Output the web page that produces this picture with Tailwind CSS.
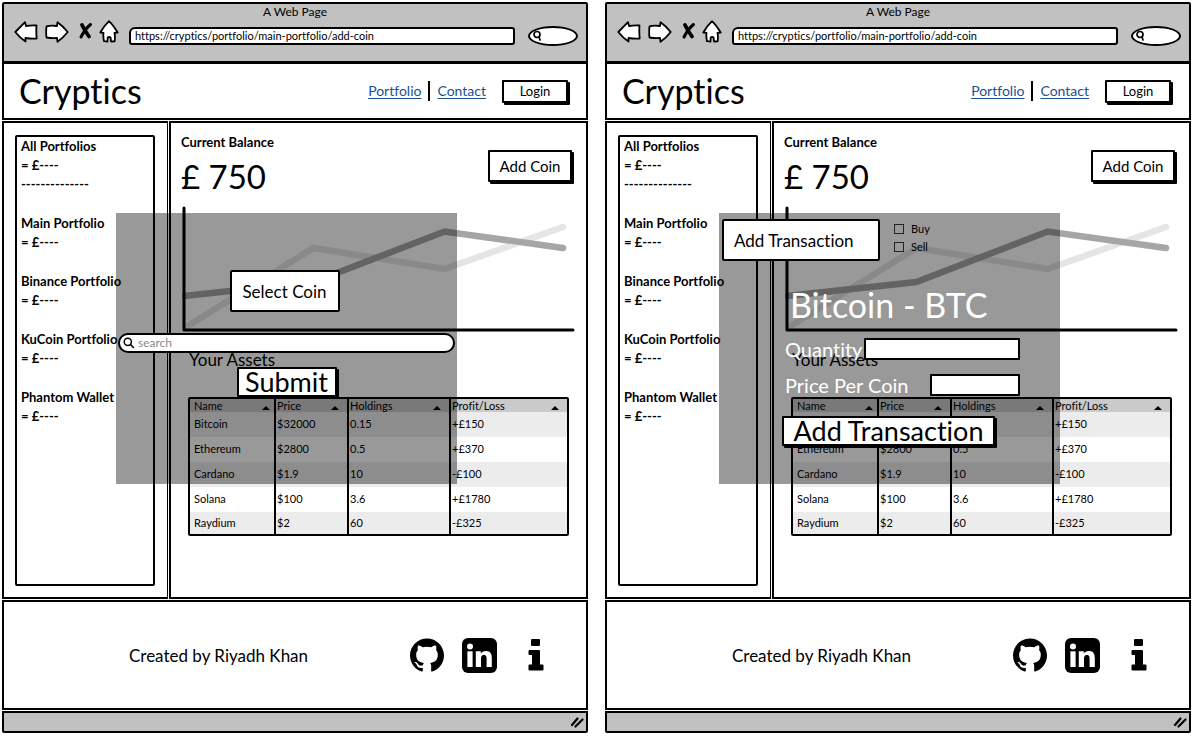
<!DOCTYPE html>
<html lang="en">
<head>
<meta charset="utf-8">
<title>Cryptics</title>
<script src="https://cdn.jsdelivr.net/npm/@tailwindcss/browser@4"></script>
</head>
<body class="bg-white font-['Lato','Open_Sans',sans-serif] text-black [font-variant-ligatures:none]">
<div id="pages" class="grid grid-cols-2 gap-[17px] pt-[2px] pr-[3px] pb-1 pl-[2px]"></div>

<template id="page">
  <article class="relative flex flex-col">
    <header class="rounded-t-[2px] border-2 border-black bg-[#c1c1c1] pb-[19px]">
      <p class="h-[17px] text-center text-xs leading-4">A Web Page</p>
      <div class="flex h-[21px] items-center pr-2 pl-2.5">
        <button type="button" aria-label="Back"><svg class="block h-[22px] w-6" viewBox="0 0 24 22" fill="#fff" stroke="#000" stroke-width="1.8" stroke-linejoin="round"><path d="M1.3 11 L11 1.2 L12 5 Q17 4.200 22.500 4.500 Q22 11 22.700 17.500 Q17 17.800 11.500 17 L11.500 20.500 Q6 17 1.300 11Z"/></svg></button>
        <button type="button" aria-label="Forward" class="ml-[7px]"><svg class="block h-[22px] w-6" viewBox="0 0 24 22" fill="#fff" stroke="#000" stroke-width="1.8" stroke-linejoin="round"><path d="M22.700 11 Q18 5 12.500 1.200 L12 5 Q6 4.300 1.500 5.300 Q.8 11 1.500 16.500 Q7 17.500 12 17 L12.500 20.800 Q18 17 22.700 11Z"/></svg></button>
        <button type="button" aria-label="Stop" class="ml-[9px]"><svg class="block h-[22px] w-[15px]" viewBox="0 0 15 22" fill="none" stroke="#000" stroke-linecap="round"><path stroke-width="3.8" d="M4 4 Q7 10 11 15.500"/><path stroke-width="3" d="M12.500 3.500 Q7 8 3 16"/></svg></button>
        <button type="button" aria-label="Home" class="ml-1.5"><svg class="block h-[23px] w-5" viewBox="0 0 20 23" fill="#fff" stroke="#000" stroke-width="1.800" stroke-linejoin="round"><path d="M10 1.200 Q14 5 18.700 12.500 L15.500 12.800 Q16.300 17 15.600 21.300 L12 21.500 L11.600 17.500 Q10 16.500 8.700 17.500 L8.500 21.500 L5 21.200 Q4 17 4.500 12.800 L1.300 12.500 Q5 6 10 1.200Z"/></svg></button>
        <input type="text" aria-label="Address" value="https://cryptics/portfolio/main-portfolio/add-coin" class="mt-2 ml-2.5 h-[18px] min-w-0 flex-1 rounded-[3px] rounded-tl-[6px] border-2 border-black bg-white px-1 text-[11px] leading-3">
        <label class="mt-2 ml-[13px] flex h-5 w-[50px] items-center rounded-[50%/50%] border-2 border-black bg-white pl-px">
          <svg class="h-3 w-3 shrink-0" viewBox="0 0 12 12" fill="none" stroke="#000" stroke-width="1.700" stroke-linecap="round"><circle cx="6" cy="4.500" r="3"/><path d="M8 7 L9 10"/></svg>
          <input type="search" aria-label="Search the web" class="w-6 bg-transparent text-[11px]">
        </label>
      </div>
    </header>

    <div class="flex h-[57px] items-center border-x-2 border-t border-b-2 border-black pr-[18px] pl-[15px]">
      <h1 class="flex-1 text-[34px] leading-10">Cryptics</h1>
      <nav class="flex items-center text-sm leading-5 text-[#1b5290]">
        <a href="#" class="underline underline-offset-2">Portfolio</a>
        <span class="mx-[7px] h-5 w-[2px] bg-black"></span>
        <a href="#" class="underline underline-offset-2">Contact</a>
      </nav>
      <button type="button" class="ml-4 h-[23px] w-[66px] rounded-[1px] border-2 border-black bg-white text-[13px] leading-4 shadow-[2px_2px_0_0_#000]">Login</button>
    </div>

    <div class="mt-px flex h-[478px] gap-px">
      <aside class="w-[166px] border-2 border-r border-black px-[11px] py-3">
        <div class="flex h-[451px] w-[140px] flex-col gap-5 rounded-[2px] border-2 border-black pl-1 text-[13px] leading-[19px] font-bold whitespace-nowrap">
          <div><h2>All Portfolios</h2><p>= £----</p><p>--------------</p></div>
          <div><h2>Main Portfolio</h2><p>= £----</p></div>
          <div><h2>Binance Portfolio</h2><p>= £----</p></div>
          <div><h2>KuCoin Portfolio</h2><p>= £----</p></div>
          <div><h2>Phantom Wallet</h2><p>= £----</p></div>
        </div>
      </aside>
      <main class="min-w-0 flex-1 border-2 border-black pt-[11px] pr-[11px] pl-2.5">
        <div class="flex items-center justify-between">
          <div>
            <h2 class="text-[13px] leading-4 font-bold">Current Balance</h2>
            <p class="mt-2 text-[33px] leading-9">£ 750</p>
          </div>
          <button type="button" class="mt-1 mr-[3px] h-8 w-[84px] rounded-[1px] border-2 border-black bg-white text-[15px] leading-5 shadow-[2px_2px_0_0_#000]">Add Coin</button>
        </div>
        <svg class="mt-3 block h-[126px] w-full pl-px" viewBox="0 0 392 126" preserveAspectRatio="none" fill="none" stroke-linecap="round" aria-label="Balance chart">
          <path d="M4 121 L131 42 L262 63 L380 21" stroke="#e5e5e5" stroke-width="6.500"/>
          <path d="M2 90 L131 76 L262 25.500 L380 42" stroke="#a6a6a6" stroke-width="6.500"/>
          <path d="M2 2 V124 H390" stroke="#000" stroke-width="3" stroke-linejoin="round"/>
        </svg>
        <h2 class="mt-4 ml-2 text-[17px] leading-6">Your Assets</h2>
        <div class="mt-[25px] mr-1.5 ml-[7px] rounded-[2px] border-2 border-black">
          <table class="w-full table-fixed border-collapse text-left text-[11px]">
            <colgroup><col class="w-[85px]"><col class="w-[73px]"><col class="w-[102px]"><col></colgroup>
            <thead class="bg-[#cacaca] leading-[13px]">
              <tr>
                <th class="border-r-2 border-black p-0 pr-1 pl-1 font-normal"><button type="button" class="flex h-[13px] w-full items-center justify-between">Name <svg class="mt-1 h-1 w-2" viewBox="0 0 8 4"><path d="M0 4 L4 0 L8 4Z"/></svg></button></th>
                <th class="border-r-2 border-black p-0 pr-2 pl-px font-normal"><button type="button" class="flex h-[13px] w-full items-center justify-between">Price <svg class="mt-1 h-1 w-2" viewBox="0 0 8 4"><path d="M0 4 L4 0 L8 4Z"/></svg></button></th>
                <th class="border-r-2 border-black p-0 pr-2 pl-px font-normal"><button type="button" class="flex h-[13px] w-full items-center justify-between">Holdings <svg class="mt-1 h-1 w-2" viewBox="0 0 8 4"><path d="M0 4 L4 0 L8 4Z"/></svg></button></th>
                <th class="p-0 pr-2 pl-px font-normal"><button type="button" class="flex h-[13px] w-full items-center justify-between">Profit/Loss <svg class="mt-1 h-1 w-2" viewBox="0 0 8 4"><path d="M0 4 L4 0 L8 4Z"/></svg></button></th>
              </tr>
            </thead>
            <tbody>
              <tr class="h-[25px] bg-[#ececec]"><td class="border-r-2 border-black p-0 pl-1">Bitcoin</td><td class="border-r-2 border-black p-0 pl-px">$32000</td><td class="border-r-2 border-black p-0 pl-px">0.15</td><td class="p-0 pl-px">+£150</td></tr>
              <tr class="h-[25px]"><td class="border-r-2 border-black p-0 pl-1">Ethereum</td><td class="border-r-2 border-black p-0 pl-px">$2800</td><td class="border-r-2 border-black p-0 pl-px">0.5</td><td class="p-0 pl-px">+£370</td></tr>
              <tr class="h-[25px] bg-[#ececec]"><td class="border-r-2 border-black p-0 pl-1">Cardano</td><td class="border-r-2 border-black p-0 pl-px">$1.9</td><td class="border-r-2 border-black p-0 pl-px">10</td><td class="p-0 pl-px">-£100</td></tr>
              <tr class="h-[25px]"><td class="border-r-2 border-black p-0 pl-1">Solana</td><td class="border-r-2 border-black p-0 pl-px">$100</td><td class="border-r-2 border-black p-0 pl-px">3.6</td><td class="p-0 pl-px">+£1780</td></tr>
              <tr class="h-[22px] bg-[#ececec]"><td class="border-r-2 border-black p-0 pl-1">Raydium</td><td class="border-r-2 border-black p-0 pl-px">$2</td><td class="border-r-2 border-black p-0 pl-px">60</td><td class="p-0 pl-px">-£325</td></tr>
            </tbody>
          </table>
        </div>
      </main>
    </div>

    <footer class="mt-px flex h-[110px] items-center border-2 border-black pr-[42px] pl-[125px]">
      <p class="flex-1 pt-[2px] text-[17px] leading-6">Created by Riyadh Khan</p>
      <a href="#" aria-label="GitHub"><svg class="h-[34px] w-[34px]" viewBox="0 0 24 24"><path d="M12 .297c-6.63 0-12 5.373-12 12 0 5.303 3.438 9.8 8.205 11.385.6.113.82-.258.82-.577 0-.285-.01-1.04-.015-2.04-3.338.724-4.042-1.61-4.042-1.61C4.422 18.07 3.633 17.7 3.633 17.7c-1.087-.744.084-.729.084-.729 1.205.084 1.838 1.236 1.838 1.236 1.07 1.835 2.809 1.305 3.495.998.108-.776.417-1.305.76-1.605-2.665-.3-5.466-1.332-5.466-5.93 0-1.31.465-2.38 1.235-3.22-.135-.303-.54-1.523.105-3.176 0 0 1.005-.322 3.3 1.23.96-.267 1.98-.399 3-.405 1.02.006 2.04.138 3 .405 2.28-1.552 3.285-1.23 3.285-1.23.645 1.653.24 2.873.12 3.176.765.84 1.23 1.91 1.23 3.22 0 4.61-2.805 5.625-5.475 5.92.42.36.81 1.096.81 2.22 0 1.606-.015 2.896-.015 3.286 0 .315.21.69.825.57C20.565 22.092 24 17.592 24 12.297c0-6.627-5.373-12-12-12"/></svg></a>
      <a href="#" aria-label="LinkedIn" class="ml-[18px]"><svg class="h-[35px] w-[35px]" viewBox="0 0 35 35"><rect width="35" height="35" rx="6"/><g fill="#fff"><circle cx="8" cy="8.500" r="3"/><rect x="5.400" y="13.300" width="5.200" height="15.700"/><path d="M13.800 13.300h5v2.200c.9-1.500 2.700-2.600 5-2.600 5 0 6 3.300 6 7.600V29h-5.200v-7.700c0-1.900 0-4.200-2.600-4.200s-3 2-3 4.100V29h-5.200z"/></g></svg></a>
      <a href="#" aria-label="Information" class="ml-[31px]"><svg class="h-8 w-4" viewBox="0 0 16 32"><path d="M4 0h7q1 0 1 1v5q0 1-1 1H4q-1 0-1-1V1q0-1 1-1zM1.500 11H11q1 0 1 1v13.500h2.500q1 0 1 1v4q0 1-1 1h-13q-1 0-1-1v-4q0-1 1-1H4V16H1.500q-1 0-1-1v-3q0-1 1-1z"/></svg></a>
    </footer>
    <div class="mt-px flex h-[22px] items-center justify-end rounded-b-[2px] border-2 border-black bg-[#c1c1c1] pr-[2px]">
      <svg class="h-3 w-3.5" viewBox="0 0 14 12" fill="none" stroke="#000" stroke-width="2.200" stroke-linecap="round"><path d="M2 9 L7.500 2.500 M5.500 10.500 L12.500 3.500"/></svg>
    </div>
  </article>
</template>

<template class="modal">
  <section aria-label="Select coin" class="absolute top-[211px] left-[114px] flex h-[271px] w-[341px] flex-col items-center bg-black/40 pt-[57px]">
    <h2 class="mr-1 h-[42px] w-[110px] rounded-[2px] border-2 border-black bg-white text-center text-[17px] leading-[40px]">Select Coin</h2>
    <label class="mt-[21px] flex h-5 w-[337px] items-center gap-[3px] rounded-full border-2 border-black bg-white pl-[3px]">
      <svg class="h-3 w-3 shrink-0" viewBox="0 0 12 12" fill="none" stroke="#000" stroke-width="1.500" stroke-linecap="round"><circle cx="4.800" cy="4.800" r="3.600"/><path d="M7.600 7.600 L10.500 10.500"/></svg>
      <input type="search" aria-label="Search coins" placeholder="search" class="min-w-0 flex-1 bg-transparent text-xs leading-4 placeholder:text-[#8a8a8a]">
    </label>
    <button type="button" class="mt-3.5 h-[30px] w-[100px] rounded-[1px] border-2 border-black bg-white text-[27px] leading-[26px] shadow-[2px_2px_0_0_#000]">Submit</button>
  </section>
</template>

<template class="modal">
  <section aria-label="Add transaction" class="absolute top-[211px] left-[114px] flex h-[271px] w-[341px] flex-col bg-black/40 pt-1.5 pl-[3px]">
    <div class="flex">
      <h2 class="h-[42px] w-[158px] rounded-[2px] border-2 border-black bg-white pl-2.5 text-[17px] leading-[40px]">Add Transaction</h2>
      <div class="mt-[2px] ml-3.5 flex flex-col gap-[2px] text-[11px] leading-4">
        <label class="flex items-center gap-[7px]"><input type="checkbox" class="h-2.5 w-2.5 appearance-none border border-[#222]">Buy</label>
        <label class="flex items-center gap-[7px]"><input type="checkbox" class="h-2.5 w-2.5 appearance-none border border-[#222]">Sell</label>
      </div>
    </div>
    <h3 class="mt-6 pl-[68px] text-[34px] leading-10 text-white">Bitcoin - BTC</h3>
    <div class="mt-[13px] flex h-[22px] w-[298px] items-center justify-between pl-[63px] text-xl text-white">
      <label for="quantity">Quantity</label>
      <input id="quantity" type="text" class="h-[22px] w-[156px] rounded-[1px] border-2 border-black bg-white px-1 text-sm text-black">
    </div>
    <div class="mt-3.5 flex h-[22px] w-[298px] items-center justify-between pl-[63px] text-xl text-white">
      <label for="price">Price Per Coin</label>
      <input id="price" type="text" class="h-[22px] w-[90px] rounded-[1px] border-2 border-black bg-white px-1 text-sm text-black">
    </div>
    <button type="button" class="mt-5 ml-[60px] h-[30px] w-[213px] rounded-[1px] border-2 border-black bg-white text-[27px] leading-[26px] whitespace-nowrap shadow-[2px_2px_0_0_#000]">Add Transaction</button>
  </section>
</template>

<script>
  const pages = document.getElementById('pages');
  const page = document.getElementById('page');
  for (const modal of document.querySelectorAll('template.modal')) {
    const copy = page.content.cloneNode(true);
    copy.querySelector('article').append(modal.content.cloneNode(true));
    pages.append(copy);
  }
</script>
</body>
</html>
